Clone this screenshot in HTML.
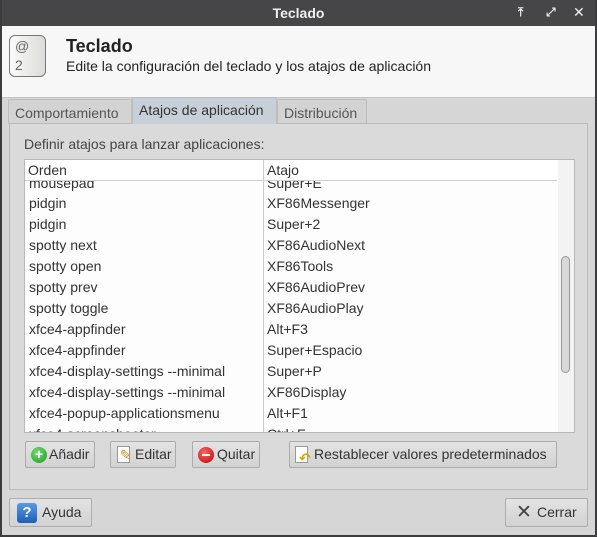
<!DOCTYPE html><html><head><style>
*{box-sizing:border-box;margin:0;padding:0}
body{width:597px;height:537px;overflow:hidden;background:#3c3b3d;font-family:"Liberation Sans","DejaVu Sans",sans-serif;font-size:14px;color:#333;position:relative}
.win{position:absolute;left:2px;top:0;width:593px;height:535px;background:#d6d6d6}
.title{position:absolute;left:0;top:0;width:593px;height:26px;background:#464547;color:#eee;font-weight:bold;font-size:14px;text-align:center;line-height:26px}
.hdr{position:absolute;left:0;top:26px;width:593px;height:72px;background:#f7f7f7;border-bottom:1px solid #c4c4c4}
.abs{position:absolute}
.tab{position:absolute;top:99px;height:25px;border:1px solid #bdbdbd;border-bottom:none;background:#d3d3d3;padding:5px 6px 0;color:#555;border-radius:2px 2px 0 0}
.panel{position:absolute;left:7px;top:123px;width:579px;height:367px;border:1px solid #bcbcbc;background:#dadada}
.list{position:absolute;left:22px;top:159px;width:551px;height:274px;background:#fdfdfd;border:1px solid #b8b8b8;overflow:hidden}
.row{position:absolute;left:0;height:21px;line-height:21px;width:532px}
.row span{position:absolute}
.btn{position:absolute;height:27px;border:1px solid #acacac;border-radius:2px;background:linear-gradient(#e3e3e3,#d2d2d2);line-height:25px;color:#333;font-size:14px}
.ic{position:absolute;top:5px;width:16px;height:16px;border-radius:50%}
</style></head><body><div class="win">
<div class="title">Teclado</div>
<div class="abs" style="left:516px;top:5px;color:#eee;font-size:12px;font-weight:bold">⤒</div>
<div class="abs" style="left:544px;top:5px;color:#eee;font-size:12px;font-weight:bold">⤢</div>
<div class="abs" style="left:571px;top:4px;color:#eee;font-size:14px;font-weight:bold">✕</div>
<div class="hdr">
<div class="abs" style="left:7px;top:9px;width:37px;height:42px;border:1px solid #777;border-radius:6px;background:linear-gradient(90deg,#fafafa,#dcdcd8);color:#666;font-size:14px;padding:1px 0 0 5px;line-height:19px">@<br>2</div>
<div class="abs" style="left:64px;top:10px;font-size:18px;font-weight:bold;color:#222">Teclado</div>
<div class="abs" style="left:64px;top:32px;font-size:14px;color:#222">Edite la configuración del teclado y los atajos de aplicación</div>
</div>
<div class="tab" style="left:6px;width:124px">Comportamiento</div>
<div class="tab" style="left:275px;width:90px">Distribución</div>
<div class="panel"></div>
<div class="tab" style="left:130px;top:97px;width:145px;height:27px;background:#c7d0d9;color:#333;padding-top:4px;z-index:2">Atajos de aplicación</div>
<div class="abs" style="left:22px;top:136px;color:#444">Definir atajos para lanzar aplicaciones:</div>
<div class="list">
<div class="row" style="top:13px"><span style="left:4px">mousepad</span><span style="left:242px">Super+E</span></div>
<div class="row" style="top:33px"><span style="left:4px">pidgin</span><span style="left:242px">XF86Messenger</span></div>
<div class="row" style="top:54px"><span style="left:4px">pidgin</span><span style="left:242px">Super+2</span></div>
<div class="row" style="top:75px"><span style="left:4px">spotty next</span><span style="left:242px">XF86AudioNext</span></div>
<div class="row" style="top:96px"><span style="left:4px">spotty open</span><span style="left:242px">XF86Tools</span></div>
<div class="row" style="top:117px"><span style="left:4px">spotty prev</span><span style="left:242px">XF86AudioPrev</span></div>
<div class="row" style="top:138px"><span style="left:4px">spotty toggle</span><span style="left:242px">XF86AudioPlay</span></div>
<div class="row" style="top:159px"><span style="left:4px">xfce4-appfinder</span><span style="left:242px">Alt+F3</span></div>
<div class="row" style="top:180px"><span style="left:4px">xfce4-appfinder</span><span style="left:242px">Super+Espacio</span></div>
<div class="row" style="top:201px"><span style="left:4px">xfce4-display-settings --minimal</span><span style="left:242px">Super+P</span></div>
<div class="row" style="top:222px"><span style="left:4px">xfce4-display-settings --minimal</span><span style="left:242px">XF86Display</span></div>
<div class="row" style="top:243px"><span style="left:4px">xfce4-popup-applicationsmenu</span><span style="left:242px">Alt+F1</span></div>
<div class="row" style="top:264px"><span style="left:4px">xfce4-screenshooter</span><span style="left:242px">Ctrl+F</span></div>
<div class="abs" style="left:0;top:0;width:532px;height:21px;background:#fff;border-bottom:1px solid #d0d0d0;line-height:21px"><span class="abs" style="left:3px">Orden</span><span class="abs" style="left:242px">Atajo</span></div>
<div class="abs" style="left:238px;top:0;width:1px;height:274px;background:#ccc"></div>
<div class="abs" style="left:533px;top:0;width:16px;height:274px;background:#f3f3f3"></div>
<div class="abs" style="left:536px;top:96px;width:9px;height:117px;border:1px solid #999;border-radius:5px;background:#d8d8d8"></div>
</div>
<div class="btn" style="left:23px;top:441px;width:70px"><span class="ic" style="left:5px;background:radial-gradient(circle at 40% 35%,#7d7,#1a9a1a);color:#fff;font-size:14px;line-height:15px;text-align:center;font-weight:bold">+</span><span class="abs" style="left:23px">Añadir</span></div>
<div class="btn" style="left:108px;top:441px;width:66px"><span class="abs" style="left:6px;top:4px;width:13px;height:17px;border:1px solid #999;background:#fff"></span><span class="abs" style="left:9px;top:1px;color:#d88a1a;font-size:14px">✎</span><span class="abs" style="left:24px">Editar</span></div>
<div class="btn" style="left:190px;top:441px;width:68px"><span class="ic" style="left:5px;background:radial-gradient(circle at 40% 35%,#f66,#b00);"></span><span class="abs" style="left:9px;top:12px;width:8px;height:2px;background:#fff"></span><span class="abs" style="left:24px">Quitar</span></div>
<div class="btn" style="left:287px;top:441px;width:268px"><span class="abs" style="left:5px;top:4px;width:13px;height:17px;border:1px solid #999;background:#fff"></span><span class="abs" style="left:9px;top:4px;color:#d6a800;font-size:14px;font-weight:bold">↶</span><span class="abs" style="left:24px">Restablecer valores predeterminados</span></div>
<div class="btn" style="left:7px;top:498px;width:83px;height:29px;line-height:27px"><span class="abs" style="left:7px;top:4px;width:20px;height:20px;border-radius:3px;background:linear-gradient(#5a9ae0,#1d5fb8);color:#fff;font-weight:bold;font-size:15px;text-align:center;line-height:20px">?</span><span class="abs" style="left:32px">Ayuda</span></div>
<div class="btn" style="left:503px;top:498px;width:83px;height:29px;line-height:27px"><span class="abs" style="left:10px;top:0;font-size:19px;color:#444;font-weight:bold">✕</span><span class="abs" style="left:31px">Cerrar</span></div>
</div></body></html>
